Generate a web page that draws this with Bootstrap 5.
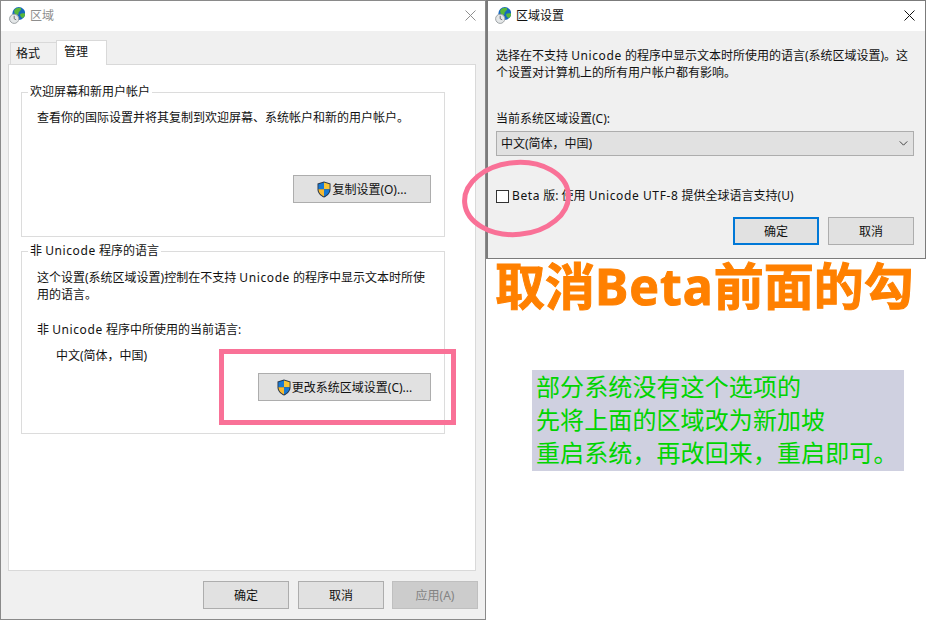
<!DOCTYPE html>
<html lang="zh-CN">
<head>
<meta charset="utf-8">
<title>区域</title>
<link href="https://cdn.jsdelivr.net/npm/bootstrap@5.3.0/dist/css/bootstrap.min.css" rel="stylesheet">
<style>
html,body{margin:0;background:#fff;overflow:hidden}
.desk{position:relative;width:926px;height:621px;font:12px/17px "Noto Sans","Noto Sans CJK SC",sans-serif;color:#111}
.lat{letter-spacing:.6px}
.win{position:absolute;top:0;background:#f0f0f0;border:1px solid #8a8a8a;display:flex;flex-direction:column}
.win-left{left:0;width:486px;height:620px}
.win-right{left:486px;width:440px;height:259px;border-left-width:2px;border-color:#7b7b7b}
.win-title{height:30px;background:#fff;display:flex;align-items:center;flex:none;padding-bottom:2px}
.win-left .win-title{padding-left:8px;padding-right:9px;color:#8e8e8e}
.win-right .win-title{padding-left:7px;padding-right:10px}
.win-title .ico{margin-right:5px}
.win-title .xbtn{margin-left:auto}
.tabstrip{display:flex;align-items:flex-end;height:34px;padding:0 0 0 9px;margin-bottom:-1px;position:relative;z-index:1;flex:none}
.tabx{border:1px solid #d9d9d9;border-bottom:0;line-height:20px;height:23px;padding:1px 5px 0;width:47px}
.tabx.on{background:#fff;width:51px;margin-left:-1px;padding:1px 6px 0 7px;height:25px}
.panel{background:#fff;border:1px solid #d9d9d9;margin:0 9px 0 7px;height:507px;padding:18px 30px 0 12px;flex:none}
.grpx{border:1px solid #dcdcdc;padding:0 13px 33px 15px;margin:0;min-width:0}
.grpx legend{float:none;width:auto;font-size:12px;line-height:18px;padding:0 2px;margin:0 0 0 -9px;color:#111}
.grpx.g1{height:154px;margin-bottom:5px}
.grpx.g2{height:192px;padding-bottom:32px}
.grp-in{display:flex;flex-direction:column;height:100%}
.grp-in p{margin:0}
.g1 .grp-in{padding-top:8px}
.g2 .grp-in{padding-top:9px}
.gap1{margin-top:18px !important}
.gap2{margin-top:9px !important;padding-left:19px}
.wbtn{--bs-btn-font-size:12px;--bs-btn-line-height:17px;--bs-btn-border-radius:0;--bs-btn-padding-x:0;--bs-btn-padding-y:0;--bs-btn-color:#111;--bs-btn-bg:#e1e1e1;--bs-btn-border-color:#adadad;--bs-btn-hover-bg:#e1e1e1;--bs-btn-hover-color:#111;--bs-btn-hover-border-color:#adadad;--bs-btn-disabled-bg:#ccc;--bs-btn-disabled-color:#838383;--bs-btn-disabled-border-color:#bfbfbf;--bs-btn-disabled-opacity:1;width:86px;height:28px;display:inline-flex;align-items:center;justify-content:center;border-width:1px}
.wbtn svg{margin-right:1px}
.b-copy{width:138px}
.b-change{width:173px}
.wbtn.dflt{--bs-btn-border-color:#0078d7;--bs-btn-hover-border-color:#0078d7;border-width:2px}
.foot{display:flex;justify-content:flex-end;padding:10px 7px 0 0}
.foot .wbtn+.wbtn{margin-left:8px}
.foot .wbtn:first-child{margin-right:1px}
.rbody{padding:16px 11px 0 8px;display:flex;flex-direction:column;flex:1}
.rbody p{margin:0}
.lab{margin-top:29px !important}
.selx{--bs-form-select-bg-img:none;margin-top:4px;height:25px;border-radius:0;border:1px solid #adadad;background-color:#e1e1e1;font-size:12px;line-height:17px;padding:0 0 0 4px;color:#111;background-image:url("data:image/svg+xml,%3csvg xmlns='http://www.w3.org/2000/svg' viewBox='0 0 10 6'%3e%3cpath fill='none' stroke='%23444' stroke-width='1.200' d='M.5.5 5 5l4.500-4.500'/%3e%3c/svg%3e");background-size:9px 5px;background-position:right 5px center}
.chkrow{display:flex;align-items:center;margin-top:31px;height:18px;padding:0;min-height:0;margin-bottom:0}
.chkrow .form-check-input{float:none;margin:0 3px 0 0;width:13px;height:13px;border:1px solid #333;border-radius:0;background-color:#fff}
.chkrow label{line-height:18px}
.rfoot{display:flex;justify-content:flex-end;margin-top:12px}
.rfoot .wbtn+.wbtn{margin-left:9px}
.big-note{position:absolute;left:495px;top:261px;font:700 50px/50px "Noto Sans","Noto Sans CJK SC",sans-serif;color:#ff8000;white-space:nowrap;-webkit-text-stroke:1px #ff8000}
.big-note span{letter-spacing:1px}
.greenbox{position:absolute;left:532px;top:370px;width:372px;height:101px;background:#cfd0e0;color:#00d400;font:400 24px/31px "Noto Sans CJK SC",sans-serif;padding:0 0 0 4px;white-space:nowrap;letter-spacing:.1px}
.greenbox div{height:33px}
.mark-rect{position:absolute;left:219px;top:349px;width:237px;height:76px;border:5px solid #f97197}
.mark-ell{position:absolute;left:460px;top:157px;pointer-events:none}
</style>
</head>
<body>
<div class="desk">
  <svg width="0" height="0" class="position-absolute">
    <defs>
      <g id="globe">
        <circle cx="9.800" cy="6.500" r="6.400" fill="#1668bd"/>
        <path d="M5.500 2.800c1.600-1.800 4-2.500 6.100-1.900 1 1 .6 2.400-.7 2.900-.4 1.400-1.600 1.200-1.400 2.700.3 1.500-1.400 2-2.400 1C6 6.800 4.600 6 5.500 2.800zM11.200 7c1.300-.9 3-1 4.900-.5.200 1.800-.9 3.500-2.400 4.500C12 10.800 10.900 8.600 11.200 7z" fill="#58b83a"/>
        <circle cx="5.200" cy="11.800" r="4.600" fill="#e4e7e8" stroke="#9ea3a6" stroke-width="1"/>
        <path d="M5.200 8.800v3l2 1" fill="none" stroke="#6a6a6a" stroke-width=".9"/>
      </g>
      <g id="shield">
        <path d="M7 .4 13.500 2.600v5.600c0 3.900-2.800 6.500-6.500 8.400C3.300 14.700.5 12.100.5 8.200V2.600z" fill="#26364a"/>
        <path d="M7 1.500v6.700H1.400V3.300z" fill="#1878d2"/>
        <path d="M7 1.500l5.600 1.800v4.900H7z" fill="#f8c534"/>
        <path d="M1.400 8.200H7v7.300c-3-1.500-5.400-3.700-5.600-7.300z" fill="#f8b92e"/>
        <path d="M7 8.200h5.600c-.2 3.600-2.600 5.800-5.600 7.300z" fill="#1878d2"/>
      </g>
    </defs>
  </svg>

  <section class="win win-left">
    <div class="win-title">
      <svg class="ico" width="16" height="17" viewBox="0 0 16 17"><use href="#globe"/></svg>
      <span>区域</span>
      <svg class="xbtn" width="11" height="11" viewBox="0 0 11 11"><path d="M.5.500l10 10M10.500.500l-10 10" stroke="#8f8f8f" fill="none"/></svg>
    </div>
    <div class="tabstrip">
      <div class="tabx">格式</div>
      <div class="tabx on">管理</div>
    </div>
    <div class="panel">
      <fieldset class="grpx g1">
        <legend>欢迎屏幕和新用户帐户</legend>
        <div class="grp-in">
          <p>查看你的国际设置并将其复制到欢迎屏幕、系统帐户和新的用户帐户。</p>
          <button type="button" class="btn wbtn b-copy mt-auto ms-auto">
            <svg width="14" height="17" viewBox="0 0 14 17"><use href="#shield"/></svg>复制设置(O)...
          </button>
        </div>
      </fieldset>
      <fieldset class="grpx g2">
        <legend>非 <span class="lat">Unicode</span> 程序的语言</legend>
        <div class="grp-in">
          <p class="text-nowrap">这个设置(系统区域设置)控制在不支持 <span class="lat">Unicode</span> 的程序中显示文本时所使</p>
          <p>用的语言。</p>
          <p class="gap1">非 <span class="lat">Unicode</span> 程序中所使用的当前语言:</p>
          <p class="gap2">中文(简体，中国)</p>
          <button type="button" class="btn wbtn b-change mt-auto ms-auto">
            <svg width="14" height="17" viewBox="0 0 14 17"><use href="#shield"/></svg>更改系统区域设置(C)...
          </button>
        </div>
      </fieldset>
    </div>
    <div class="foot">
      <button type="button" class="btn wbtn">确定</button>
      <button type="button" class="btn wbtn">取消</button>
      <button type="button" class="btn wbtn" disabled>应用(A)</button>
    </div>
  </section>

  <section class="win win-right">
    <div class="win-title">
      <svg class="ico" width="16" height="17" viewBox="0 0 16 17"><use href="#globe"/></svg>
      <span>区域设置</span>
      <svg class="xbtn" width="11" height="11" viewBox="0 0 11 11"><path d="M.5.500l10 10M10.500.500l-10 10" stroke="#111" fill="none"/></svg>
    </div>
    <div class="rbody">
      <p class="text-nowrap">选择在不支持 <span class="lat">Unicode</span> 的程序中显示文本时所使用的语言(系统区域设置)。这</p>
      <p>个设置对计算机上的所有用户帐户都有影响。</p>
      <p class="lab">当前系统区域设置(C):</p>
      <select class="form-select selx"><option>中文(简体，中国)</option></select>
      <div class="form-check chkrow">
        <input class="form-check-input" type="checkbox" id="beta">
        <label for="beta"><span class="lat">Beta</span> 版: 使用 <span class="lat">Unicode UTF-8</span> 提供全球语言支持(U)</label>
      </div>
      <div class="rfoot">
        <button type="button" class="btn wbtn dflt">确定</button>
        <button type="button" class="btn wbtn">取消</button>
      </div>
    </div>
  </section>

  <div class="mark-rect"></div>
  <svg class="mark-ell" width="114" height="84" viewBox="0 0 114 84"><ellipse cx="56.500" cy="41.500" rx="52" ry="36" fill="none" stroke="#f97197" stroke-width="5" transform="rotate(-5 56.500 41.500)"/></svg>

  <div class="big-note">取消<span>Beta</span>前面的勾</div>
  <div class="greenbox">
    <div>部分系统没有这个选项的</div>
    <div>先将上面的区域改为新加坡</div>
    <div>重启系统，再改回来，重启即可。</div>
  </div>
</div>
<script src="https://cdn.jsdelivr.net/npm/bootstrap@5.3.0/dist/js/bootstrap.bundle.min.js"></script>
</body>
</html>
